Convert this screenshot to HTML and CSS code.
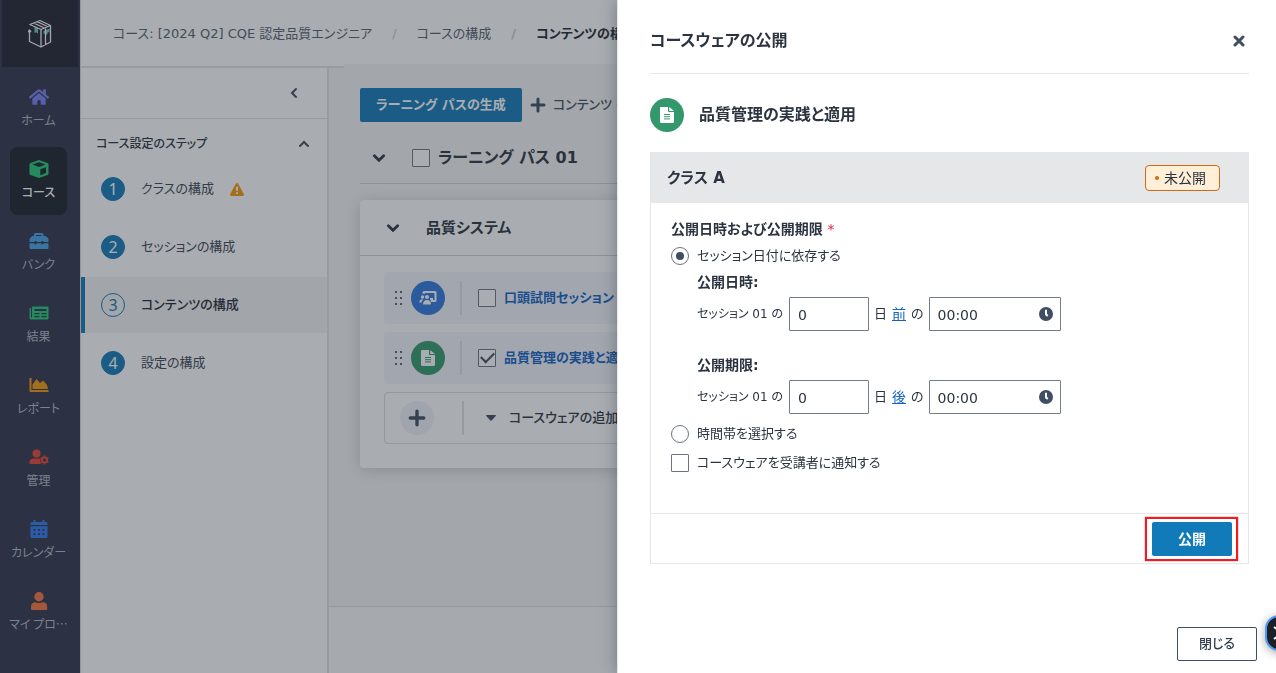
FILE: index.html
```html
<!DOCTYPE html>
<html lang="ja">
<head>
<meta charset="utf-8">
<meta name="viewport" content="width=device-width, initial-scale=1">
<title>コースウェアの公開</title>
<link rel="stylesheet" href="styles.css">
</head>
<body>
<svg class="defs" aria-hidden="true">
  <symbol id="i-doc" viewBox="0 0 14 16"><path d="M1.200 0H8v4.200c0 .5.3.8.8.8H14v9.800c0 .7-.5 1.200-1.200 1.200H1.200C.5 16 0 15.500 0 14.800V1.200C0 .5.5 0 1.200 0Z"/><path d="M9.200 0 14 4H9.200Z"/><path class="cut" d="M4 7.500h6M4 9.700h6M4 11.900h6"/></symbol>
  <symbol id="i-down" viewBox="0 0 12 12"><path d="m2 4 4 4 4-4"/></symbol>
  <symbol id="i-plus" viewBox="0 0 16 16"><path d="M8 2v12M2 8h12"/></symbol>
  <symbol id="i-clock" viewBox="0 0 14 14"><circle cx="7" cy="7" r="7"/><path class="cut" d="M7 2.800V7.500l1.800 1.400"/></symbol>
  <symbol id="i-grip" viewBox="0 0 10 16"><path d="M2 1h2v2H2zM7 1h2v2H7zM2 7h2v2H2zM7 7h2v2H7zM2 13h2v2H2zM7 13h2v2H7z"/></symbol>
</svg>

<div class="app">
  <nav class="rail" aria-label="メイン">
    <a class="logo" href="#" aria-label="ホーム">
      <svg width="24" height="30" viewBox="0 0 24 30" fill="none" stroke="#f4f6f8" stroke-width="1.300" stroke-linejoin="round">
        <path fill="#6fc4be" stroke="none" d="M6.500 7.500l3.500 1.700v5.500l-1.500-1.500-2 .8ZM15.500 12l6-2.500v4l-1.500-.5-1.200 3.500-1-2.500-2.300 1Z"/>
        <path d="M1.800 5.500 12 1.500l10.500 5v16.500L13 28V10.500L1.800 5.500ZM13 10.500l9.500-4M5.500 4l11 5M9 2.700 19.500 7.500M17.500 9.500V26M1.500 11v11.500L13 28M0 13l1.500-2L3 13"/>
      </svg>
    </a>
    <ul class="rail-list">
      <li><a class="rail-item" href="#"><svg class="c-indigo" width="20" height="18" viewBox="0 0 576 512"><path d="M280.370 148.260L96 300.110V464a16 16 0 0 0 16 16l112.060-.29a16 16 0 0 0 15.920-16V368a16 16 0 0 1 16-16h64a16 16 0 0 1 16 16v95.640a16 16 0 0 0 16 16.050L464 480a16 16 0 0 0 16-16V300L295.670 148.260a12.190 12.190 0 0 0-15.300 0zM571.600 251.470L488 182.560V44.050a12 12 0 0 0-12-12h-56a12 12 0 0 0-12 12v72.610L318.470 43a48 48 0 0 0-61 0L4.340 251.470a12 12 0 0 0-1.600 16.900l25.500 31A12 12 0 0 0 45.150 301l235.220-193.740a12.190 12.190 0 0 1 15.300 0L530.900 301a12 12 0 0 0 16.900-1.600l25.500-31a12 12 0 0 0-1.700-16.930z"/></svg><span>ホーム</span></a></li>
      <li><a class="rail-item active" href="#"><svg class="c-green" width="20" height="18" viewBox="0 0 20 18"><path fill-rule="evenodd" d="M10 0 18.500 3q1 .4 1 1.300v9.400q0 .9-1 1.300L10 18 1.500 15q-1-.4-1-1.300V4.300q0-.9 1-1.300ZM10 2.300 3.500 4.600 10 7l6.500-2.400ZM11.300 9.300v5.900L17 13.100V7.200Z"/></svg><span>コース</span></a></li>
      <li><a class="rail-item" href="#"><svg class="c-sky" width="20" height="18" viewBox="0 0 20 18"><path fill-rule="evenodd" d="M5 4V2.500Q5 1 6.500 1h6Q14.500 1 14.500 2.500V4h1.600q.7 0 1.200.5l1.700 1.800q.5.500.5 1.200V10h-5V9h-2v1h-5V9h-2v1h-5V7.500q0-.7.5-1.200L2.700 4.500Q3.200 4 3.900 4ZM7 4h5.500V3H7ZM.5 11.200h5v1h2v-1h5v1h2v-1h5V16q0 1-1 1h-17q-1 0-1-1Z"/></svg><span>バンク</span></a></li>
      <li><a class="rail-item" href="#"><svg class="c-green" width="20" height="18" viewBox="0 0 20 18"><path fill-rule="evenodd" d="M4 2.500h14.500q1 0 1 1v11q0 1-1 1H2q-1.500 0-1.500-1.500V5q0-1 1-1H2v9.500h1V3.500q0-1 1-1ZM5.500 5v2h12V5Zm0 4v1.200h5V9Zm7 0v1.200h5V9Zm-7 3v1.200h5V12Zm7 0v1.200h5V12Z"/></svg><span>結果</span></a></li>
      <li><a class="rail-item" href="#"><svg class="c-amber" width="20" height="18" viewBox="0 0 20 18"><path d="M.5 2h2v12h17v2h-18q-1 0-1-1ZM3.500 13V8.500L7.500 3l3.500 4 3-2.500L18 9l1 4Z"/></svg><span>レポート</span></a></li>
      <li><a class="rail-item" href="#"><svg class="c-red" width="20" height="18" viewBox="0 0 20 18"><circle cx="7.500" cy="5.500" r="4"/><path d="M1 16q-.5 0-.5-1v-1q.5-3.500 4-3.500h6q.8 0 1.200.3-1.500 2.700.3 5.200Z"/><circle cx="15.500" cy="12" r="2.600" fill="none" stroke="currentColor" stroke-width="2"/><path fill="none" stroke="currentColor" stroke-width="1.800" d="M15.500 7.600v1.700M15.500 14.700v1.700M11.700 9.800l1.500.9M17.800 13.300l1.500.9M19.300 9.800l-1.500.9M13.200 13.300l-1.500.9"/></svg><span>管理</span></a></li>
      <li><a class="rail-item" href="#"><svg class="c-blue" width="20" height="18" viewBox="0 0 20 18"><path fill-rule="evenodd" d="M4.500 0h2v2h7V0h2v2H17q1.500 0 1.500 1.500V5h-17V3.500Q1.500 2 3 2h1.500ZM1.500 6.300h17v10.200q0 1.500-1.500 1.500H3q-1.500 0-1.500-1.500ZM4.500 9v1.800h2V9Zm4.500 0v1.800h2V9Zm4.500 0v1.800h2V9Zm-9 4.200V15h2v-1.800Zm4.500 0V15h2v-1.800Zm4.500 0V15h2v-1.800Z"/></svg><span>カレンダー</span></a></li>
      <li><a class="rail-item" href="#"><svg class="c-orange" width="20" height="18" viewBox="0 0 20 18"><circle cx="10" cy="4.700" r="4.700"/><path d="M6 10.300q4 1.500 8 0 4 .2 4.200 4.200V17q0 1-1 1H3q-1 0-1-1v-2.500q.2-4 4-4.200Z"/></svg><span>マイ プロ…</span></a></li>
    </ul>
  </nav>

  <div class="workspace">
    <header class="topbar">
      <ol class="crumbs">
        <li><a href="#">コース: [2024 Q2] CQE 認定品質エンジニア</a></li>
        <li><a href="#">コースの構成</a></li>
        <li class="current">コンテンツの構成</li>
      </ol>
    </header>
    <div class="columns">
      <aside class="steps">
        <div class="steps-head"><button class="icon-btn" type="button" aria-label="折りたたむ"><svg class="line" width="12" height="12" viewBox="0 0 12 12"><path d="M8 2 4 6l4 4"/></svg></button></div>
        <div class="steps-title"><h2>コース設定のステップ</h2><svg class="line" width="12" height="12" viewBox="0 0 12 12"><path d="m2 8 4-4 4 4"/></svg></div>
        <ol class="step-list">
          <li><a class="step" href="#"><span class="num">1</span><span>クラスの構成</span><svg class="warn" width="14" height="13" viewBox="0 0 14 13"><path d="M7 0q.6 0 1 .6l5.800 10.500q.5 1.400-1 1.900H1.200q-1.500-.5-1-1.900L6 .6Q6.400 0 7 0Z"/><path class="cut" d="M7 3.800v4M7 9.300v1.700"/></svg></a></li>
          <li><a class="step" href="#"><span class="num">2</span><span>セッションの構成</span></a></li>
          <li><a class="step active" href="#"><span class="num">3</span><span>コンテンツの構成</span></a></li>
          <li><a class="step" href="#"><span class="num">4</span><span>設定の構成</span></a></li>
        </ol>
      </aside>
      <main class="content">
        <div class="content-body">
          <div class="toolbar">
            <button class="btn primary wide" type="button">ラーニング パスの生成</button>
            <button class="text-btn" type="button"><svg class="line bold" width="16" height="16"><use href="#i-plus"/></svg>コンテンツ グループの追加</button>
          </div>
          <div class="path-row">
            <svg class="line heavy" width="14" height="14"><use href="#i-down"/></svg>
            <label class="path-name"><input class="check" type="checkbox">ラーニング パス 01</label>
          </div>
          <section class="card">
            <div class="card-head"><svg class="line heavy" width="14" height="14"><use href="#i-down"/></svg><h3>品質システム</h3></div>
            <div class="card-body">
              <div class="ware">
                <svg class="grip" width="10" height="16"><use href="#i-grip"/></svg>
                <span class="disc blue"><svg width="18" height="16" viewBox="0 0 18 16"><path fill-rule="evenodd" d="M5 1h11q1.500 0 1.500 1.500v8q0 1.500-1.500 1.500h-4q0-1.500-1-2.500V8h3v2h1.500V3H6v1q-1.500-1-2.500 0V2.500Q3.500 1 5 1Z"/><circle cx="8" cy="7" r="2"/><circle cx="3.500" cy="7" r="1.700"/><path d="M4 14.500q0-4.500 4-4.500t4 4.500ZM.3 12.500q0-3.500 4-3.200-1.500 1.200-1.800 3.200Z"/></svg></span>
                <label class="ware-name"><input class="check" type="checkbox">口頭試問セッション</label>
              </div>
              <div class="ware">
                <svg class="grip" width="10" height="16"><use href="#i-grip"/></svg>
                <span class="disc green"><svg width="14" height="16"><use href="#i-doc"/></svg></span>
                <label class="ware-name"><input class="check" type="checkbox" checked>品質管理の実践と適用</label>
              </div>
              <div class="ware add">
                <button class="disc pale" type="button" aria-label="追加"><svg class="line bold" width="18" height="18" viewBox="0 0 16 16"><use href="#i-plus"/></svg></button>
                <button class="add-btn" type="button"><svg width="10" height="6" viewBox="0 0 10 6"><path d="M.5 0h9q.8.300.2 1L5.600 5.600q-.6.500-1.200 0L.3 1q-.6-.7.2-1Z"/></svg>コースウェアの追加</button>
              </div>
            </div>
          </section>
        </div>
        <footer class="content-foot"></footer>
      </main>
    </div>
  </div>
</div>

<div class="overlay"></div>

<section class="drawer" role="dialog" aria-labelledby="drawer-title">
  <header class="drawer-head">
    <h1 id="drawer-title">コースウェアの公開</h1>
    <button class="icon-btn" type="button" aria-label="閉じる"><svg class="line bold" width="12" height="12" viewBox="0 0 12 12"><path d="m2 2 8 8M10 2l-8 8"/></svg></button>
  </header>
  <div class="ware-title"><span class="disc green"><svg width="14" height="16"><use href="#i-doc"/></svg></span><h2>品質管理の実践と適用</h2></div>

  <form class="panel">
    <header class="panel-head"><h3>クラス A</h3><span class="badge">未公開</span></header>
    <fieldset class="panel-body">
      <legend>公開日時および公開期限 <span class="req">*</span></legend>
      <label class="option"><input class="radio" type="radio" name="mode" checked>セッション日付に依存する</label>
      <div class="timing">
        <h4>公開日時:</h4>
        <div class="timing-row">
          <label class="lead" for="d1">セッション 01 の</label><input class="field days" id="d1" type="text" value="0">
          <span>日</span><a href="#">前</a><span>の</span>
          <span class="time"><input class="field" type="text" value="00:00" aria-label="公開時刻"><svg width="14" height="14"><use href="#i-clock"/></svg></span>
        </div>
      </div>
      <div class="timing last">
        <h4>公開期限:</h4>
        <div class="timing-row">
          <label class="lead" for="d2">セッション 01 の</label><input class="field days" id="d2" type="text" value="0">
          <span>日</span><a href="#">後</a><span>の</span>
          <span class="time"><input class="field" type="text" value="00:00" aria-label="期限時刻"><svg width="14" height="14"><use href="#i-clock"/></svg></span>
        </div>
      </div>
      <label class="option"><input class="radio" type="radio" name="mode">時間帯を選択する</label>
      <label class="option notify"><input class="check" type="checkbox">コースウェアを受講者に通知する</label>
    </fieldset>
    <footer class="panel-foot"><span class="focus-box"><button class="btn primary" type="button">公開</button></span></footer>
  </form>

  <footer class="drawer-foot"><button class="btn outline" type="button">閉じる</button></footer>
</section>

<button class="helper" type="button" aria-label="ヘルプ"><svg width="20" height="20" viewBox="0 0 20 20" fill="none" stroke="#fff" stroke-width="2"><path d="m1 4 4 3M1 16l4-3M9 4h8M9 16h8"/></svg></button>
</body>
</html>
```
FILE: styles.css
```css
* { box-sizing: border-box; }

body {
  margin: 0;
  font-family: "DejaVu Sans", "Noto Sans CJK JP", sans-serif;
  font-size: 13px;
  line-height: 20px;
  font-feature-settings: "palt";
  color: #2b3440;
  background: #fff;
  overflow: hidden;
}

h1, h2, h3, h4, ol, ul { margin: 0; padding: 0; list-style: none; }
h1, h2, h3, h4, legend { font-weight: 700; }
button, input { font: inherit; font-feature-settings: inherit; color: inherit; }
button { padding: 0; border: 0; background: none; cursor: pointer; }
a { color: inherit; text-decoration: none; }
svg { fill: currentColor; flex: none; display: block; }
.defs { position: absolute; width: 0; height: 0; }
.line { fill: none; stroke: #3f4e5f; stroke-width: 2; stroke-linecap: round; }
.line.heavy { stroke: #2b3440; stroke-width: 2.4; }
.line.bold { stroke-width: 3; }
.icon-btn { display: grid; place-items: center; width: 20px; height: 20px; }

/* Application shell */
.app { display: flex; height: 100vh; white-space: nowrap; }
.rail { flex: none; width: 80px; background: #30324b; color: #b3b7c3; font-family: "Noto Sans CJK JP", sans-serif; font-size: 12px; }
.logo { display: grid; place-items: center; height: 67px; margin: 0 2px; background: #20212f; }
.logo svg { fill: none; }
.rail-list { display: grid; grid-template-columns: minmax(0, 1fr); gap: 4px; padding: 8px 13px 0 10px; }
.rail-item {
  display: flex; flex-direction: column; align-items: center; justify-content: center; gap: 4px;
  height: 68px; border-radius: 8px;
}
.rail-item.active { background: #1b2028; color: #fff; font-weight: 500; }
.c-indigo { color: #7880f2; }
.c-green { color: #23c878; }
.c-sky { color: #43a5e6; }
.c-amber { color: #f59a0b; }
.c-red { color: #ea4335; }
.c-blue { color: #2f7bee; }
.c-orange { color: #f5743c; }

.workspace { flex: 1; min-width: 0; display: flex; flex-direction: column; border-left: 1px solid #d8dce0; }
.topbar { flex: none; height: 68px; padding: 0 32px; border-bottom: 2px solid #e3e5e8; }
.crumbs { display: flex; align-items: center; height: 68px; color: #55606e; }
.crumbs li + li::before { content: "/"; margin: 0 20px; color: #c4c9cf; }
.crumbs .current { font-weight: 700; color: #1d2733; }
.columns { flex: 1; display: flex; min-height: 0; }

.steps { flex: none; width: 248px; border-right: 2px solid #e3e5e8; }
.steps-head { display: flex; justify-content: flex-end; align-items: center; height: 51px; padding-right: 23px; border-bottom: 1px solid #dfe2e5; }
.steps-title { display: flex; justify-content: space-between; align-items: center; height: 42px; padding: 8px 17px 0 15px; }
.steps-title h2 { font-size: 12px; font-weight: 500; }
.step-list { display: grid; gap: 2px; }
.step { display: flex; align-items: center; gap: 16px; height: 56px; padding-left: 16px; border-left: 4px solid transparent; color: #3a4654; }
.step.active { background: #f3f4f5; border-color: #117ab8; color: #1d2733; font-weight: 500; }
.num { display: grid; place-items: center; width: 24px; height: 24px; border: 1px solid #117ab8; border-radius: 50%; background: #117ab8; color: #fff; font-family: "Noto Sans", sans-serif; font-size: 16px; font-weight: 400; }
.step.active .num { background: none; color: #117ab8; }
.warn { color: #f59a0b; }
.warn .cut { fill: none; stroke: #fff; stroke-width: 2; }

.content { flex: 1; min-width: 0; display: flex; flex-direction: column; background: #f6f7f8; }
.content-body { flex: 1; margin: -4px 0 0 15px; padding: 24px 32px 0 16px; background: #f6f7f8; }
.content-foot { flex: none; height: 67px; border-top: 1px solid #dcdfe2; background: #fafbfb; }
.toolbar { display: flex; align-items: center; gap: 8px; }
.text-btn { display: flex; align-items: center; gap: 7px; color: #3f4e5f; font-weight: 500; }
.path-row { display: flex; align-items: center; gap: 26px; height: 62px; padding: 10px 0 0 12px; border-bottom: 1px solid #d0d4d8; }
.path-name { display: flex; align-items: center; gap: 8px; font-size: 16px; font-weight: 700; }
.card { margin-top: 16px; border-radius: 4px; background: #fff; box-shadow: 0 2px 16px rgba(43, 52, 64, .22); }
.card-head { display: flex; align-items: center; gap: 26px; height: 56px; padding-left: 26px; border-bottom: 1px solid #d0d4d8; }
.card-head h3 { font-size: 15px; }
.card-body { display: grid; gap: 8px; padding: 16px 24px 24px; }
.ware { display: flex; align-items: center; gap: 8px; height: 52px; padding-left: 9px; border-radius: 4px; background: #f3f6fd; }
.grip { color: #5b6673; }
.disc { display: grid; place-items: center; flex: none; width: 34px; height: 34px; border-radius: 50%; color: #fff; }
.disc.green { background: #33996c; }
.disc.blue { background: #2f78e0; }
.disc.pale { background: #f1f4fa; }
#i-doc .cut { fill: none; stroke: #33996c; stroke-width: 1; }
#i-clock .cut { fill: none; stroke: #fff; stroke-width: 2; }
.ware-name { display: flex; align-items: center; gap: 8px; height: 34px; margin-left: 7px; padding-left: 16px; border-left: 2px solid #dfe2e8; color: #1262c4; font-weight: 700; }
.ware.add { padding-left: 15px; border: 1px solid #dcdfe3; background: none; }
.add-btn { display: flex; align-items: center; gap: 13px; height: 34px; margin-left: 20px; padding-left: 22px; border-left: 2px solid #dfe2e8; font-weight: 500; }
.add-btn svg { color: #3f4e5f; }

/* Controls */
.btn { height: 34px; min-width: 80px; border-radius: 2px; font-weight: 700; }
.btn.primary { background: #117ab8; color: #fff; }
.btn.wide { padding: 0 16px; }
.btn.outline { border: 1px solid #3f4e63; background: #fff; color: #2f3d4e; font-weight: 500; }
.check, .radio { appearance: none; flex: none; display: grid; place-items: center; width: 18px; height: 18px; margin: 0; border: 1px solid #6b7580; border-radius: 1px; background: #fff; }
.radio { border-radius: 50%; }
.radio:checked::after { content: ""; width: 8px; height: 8px; border-radius: 50%; background: #3f4e63; }
.check:checked::after { content: ""; width: 11px; height: 6px; margin-bottom: 4px; border: solid #3f4e5f; border-width: 0 0 2px 2px; transform: rotate(-45deg); }
.field { width: 100%; height: 34px; padding: 2px 8px 0; border: 1px solid #737d89; border-radius: 1px; background: #fff; font-size: 14px; }

.overlay { position: fixed; inset: 0; background: rgba(40, 47, 57, .4); }

/* Publish drawer */
.drawer {
  position: fixed; inset: 0 0 0 auto; width: calc(50% + 21px);
  display: flex; flex-direction: column; padding: 8px 27px 12px 32px;
  border-left: 1px solid #e5e7e9; background: #fff; box-shadow: 0 0 16px rgba(20, 27, 36, .35);
}
.drawer-head { display: flex; justify-content: space-between; align-items: center; height: 66px; border-bottom: 1px solid #e5e7e9; }
.drawer-head h1 { font-size: 16px; line-height: 24px; }
.ware-title { display: flex; align-items: center; gap: 15px; padding: 24px 0 20px; }
.ware-title h2 { font-size: 16px; }
.panel { border: 1px solid #e5e7e9; }
.panel-head { display: flex; justify-content: space-between; align-items: center; height: 50px; padding: 0 28px 0 16px; background: #e5e7e9; }
.panel-head h3 { font-size: 15px; }
.badge { display: flex; align-items: center; gap: 5px; height: 26px; padding: 0 13px 0 9px; border: 1px solid #cc6a1a; border-radius: 4px; background: #ffefd6; font-size: 14px; }
.badge::before { content: ""; width: 4px; height: 4px; border-radius: 50%; background: #cc6a1a; }
.panel-body { min-width: 0; margin: 0; padding: 16px 20px 40px; border: 0; }
.panel-body legend { float: left; width: 100%; padding: 0; margin-bottom: 7px; font-size: 14px; }
.req { color: #dc2640; font-weight: 400; }
.option { clear: both; display: flex; align-items: center; gap: 8px; height: 20px; }
.timing { padding: 6px 0 0 26px; }
.timing h4 { font-size: 14px; margin-bottom: 5px; }
.timing.last { padding: 24px 0 0 26px; margin-bottom: 10px; }
.timing-row { display: flex; align-items: center; gap: 5px; }
.lead { min-width: 87px; font-size: 12px; }
.timing-row a { color: #1262c4; text-decoration: underline; font-size: 14px; }
.days { width: 80px; }
.time { position: relative; width: 132px; }
.time svg { position: absolute; right: 8px; top: 10px; color: #3f4e63; }
.notify { margin-top: 9px; }
.panel-foot { display: flex; justify-content: flex-end; padding: 3px 10px 2px; border-top: 1px solid #e5e7e9; }
.focus-box { padding: 3px 4px 3px 5px; border: 2px solid #ee1c25; box-shadow: 0 0 1px #ee1c25; }
.focus-box .btn { display: block; font-size: 14px; }
.drawer-foot { display: flex; justify-content: flex-end; margin: auto -8px 0 0; }

.helper {
  position: fixed; right: -25px; bottom: 22px; width: 36px; height: 36px;
  display: grid; place-items: center; border: 2px solid #4d9bf5; border-radius: 14px;
  background: #1b1f27; box-shadow: 0 2px 10px rgba(0, 0, 0, .35);
}
```
